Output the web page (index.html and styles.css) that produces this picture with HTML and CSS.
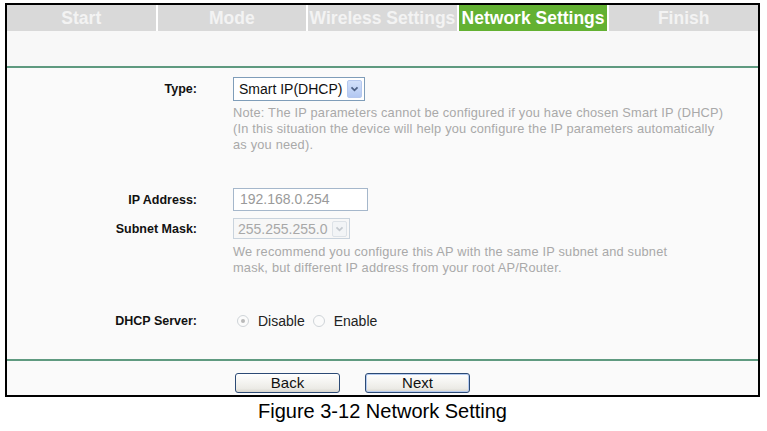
FILE: index.html
```html
<!DOCTYPE html>
<html>
<head>
<meta charset="utf-8">
<link rel="stylesheet" href="styles.css">
</head>
<body>
<div class="frame">
  <div class="tabs">
    <div class="tab">Start</div>
    <div class="tab">Mode</div>
    <div class="tab">Wireless Settings</div>
    <div class="tab active">Network Settings</div>
    <div class="tab">Finish</div>
  </div>
  <div class="band"></div>
  <div class="content">
    <div class="row row-type">
      <div class="label">Type:</div>
      <div class="select sel-type">
        <span class="sel-text">Smart IP(DHCP)</span>
        <span class="arrow">
          <svg width="15" height="18" viewBox="0 0 15 18"><path d="M4 7 L7.5 10.5 L11 7" fill="none" stroke="#4d6185" stroke-width="2"/></svg>
        </span>
      </div>
    </div>
    <div class="note note-type">Note: The IP parameters cannot be configured if you have chosen Smart IP (DHCP)<br>(In this situation the device will help you configure the IP parameters automatically<br>as you need).</div>
    <div class="row row-ip">
      <div class="label">IP Address:</div>
      <div class="input">192.168.0.254</div>
    </div>
    <div class="row row-mask">
      <div class="label">Subnet Mask:</div>
      <div class="select sel-mask">
        <span class="sel-text">255.255.255.0</span>
        <span class="arrow arrow-dis">
          <svg width="15" height="16" viewBox="0 0 15 16"><path d="M4 6 L7.5 9.5 L11 6" fill="none" stroke="#c4c9cf" stroke-width="2"/></svg>
        </span>
      </div>
    </div>
    <div class="note note-mask">We recommend you configure this AP with the same IP subnet and subnet<br>mask, but different IP address from your root AP/Router.</div>
    <div class="row row-dhcp">
      <div class="label">DHCP Server:</div>
      <div class="radios">
        <span class="radio checked"></span><span class="rlabel">Disable</span>
        <span class="radio"></span><span class="rlabel">Enable</span>
      </div>
    </div>
  </div>
  <div class="buttons">
    <div class="btn">Back</div>
    <div class="btn next">Next</div>
  </div>
</div>
<div class="caption">Figure 3-12 Network Setting</div>
</body>
</html>
```

FILE: styles.css
```css
html, body {
  margin: 0;
  padding: 0;
  background: #ffffff;
  font-family: "Liberation Sans", Arial, sans-serif;
}

.frame {
  margin: 3px 0 0 5px;
  width: 751px;
  border: 2px solid #000;
  background: #fafafa;
  display: flex;
  flex-direction: column;
}

.tabs {
  display: flex;
  gap: 2px;
  height: 26px;
  background: #ffffff;
}

.tab {
  flex: 1;
  background: #d9d9d9;
  color: #f3f3f3;
  font-weight: bold;
  font-size: 17.5px;
  line-height: 26px;
  text-align: center;
  white-space: nowrap;
  overflow: hidden;
}

.tab.active {
  background: #63b132;
  color: #ffffff;
}

.band {
  height: 35px;
  background: #f8f8f8;
  border-bottom: 2px solid #5f9a80;
}

.content {
  height: 293px;
  box-sizing: border-box;
  padding: 9px 0 0 0;
  border-bottom: 2px solid #5f9a80;
  display: flex;
  flex-direction: column;
}

.row {
  display: flex;
  align-items: center;
  gap: 36px;
}

.label {
  width: 190px;
  text-align: right;
  font-weight: bold;
  font-size: 12.5px;
  color: #111;
}

.select {
  display: flex;
  align-items: center;
  box-sizing: border-box;
  border: 1px solid #7f9db9;
  background: #fff;
  font-size: 14px;
  color: #111;
}

.sel-type {
  width: 132px;
  height: 24px;
  padding-left: 5px;
}

.sel-text {
  flex: 1;
  white-space: nowrap;
}

.arrow {
  width: 15px;
  height: 18px;
  margin-right: 2px;
  border-radius: 2px;
  background: linear-gradient(#d3e1fa, #b3c8f2);
  border: 1px solid #b6c8ee;
  box-sizing: border-box;
  display: flex;
  align-items: center;
  justify-content: center;
}

.arrow svg {
  display: block;
}

.note {
  margin-left: 226px;
  font-size: 12.8px;
  letter-spacing: 0.2px;
  line-height: 16px;
  color: #a9a9a9;
  white-space: nowrap;
}

.note-type {
  margin-top: 4px;
}

.row-ip {
  margin-top: 35px;
}

.input {
  width: 135px;
  height: 23px;
  box-sizing: border-box;
  border: 1px solid #a5b7cb;
  background: #fff;
  color: #9a9a9a;
  font-size: 14px;
  line-height: 21px;
  padding-left: 6px;
}

.row-mask {
  margin-top: 7px;
}

.sel-mask {
  width: 117px;
  height: 21px;
  padding-left: 4px;
  border-color: #c9d3dd;
  background: #f7f7f7;
  color: #a8a8a8;
}

.arrow-dis {
  height: 16px;
  background: #f2f4f6;
  border-color: #dde2e7;
}

.note-mask {
  margin-top: 5px;
}

.row-dhcp {
  margin-top: 37px;
}

.radios {
  display: flex;
  align-items: center;
  font-size: 14px;
  color: #222;
}

.radio {
  width: 12px;
  height: 12px;
  box-sizing: border-box;
  border: 1px solid #cfd4d8;
  border-radius: 50%;
  background: #fbfbfb;
  margin: 0 9px 0 4px;
  display: flex;
  align-items: center;
  justify-content: center;
}

.radio.checked::after {
  content: "";
  width: 4px;
  height: 4px;
  border-radius: 50%;
  background: #b9b9b9;
}

.rlabel {
  margin-right: 4px;
}

.buttons {
  height: 34px;
  box-sizing: border-box;
  padding: 12px 0 0 228px;
  display: flex;
  gap: 25px;
  background: #fafafa;
}

.btn {
  width: 105px;
  height: 20px;
  box-sizing: border-box;
  border: 1px solid #2c4a75;
  border-radius: 3px;
  background: linear-gradient(#ffffff, #ecebe6 80%, #d8d6cf);
  font-size: 15px;
  line-height: 18px;
  text-align: center;
  color: #111;
}

.btn.next {
  box-shadow: inset 0 0 0 1px #b5cbf0;
}

.caption {
  width: 765px;
  text-align: center;
  font-size: 20px;
  line-height: 28px;
  color: #000;
}
```
